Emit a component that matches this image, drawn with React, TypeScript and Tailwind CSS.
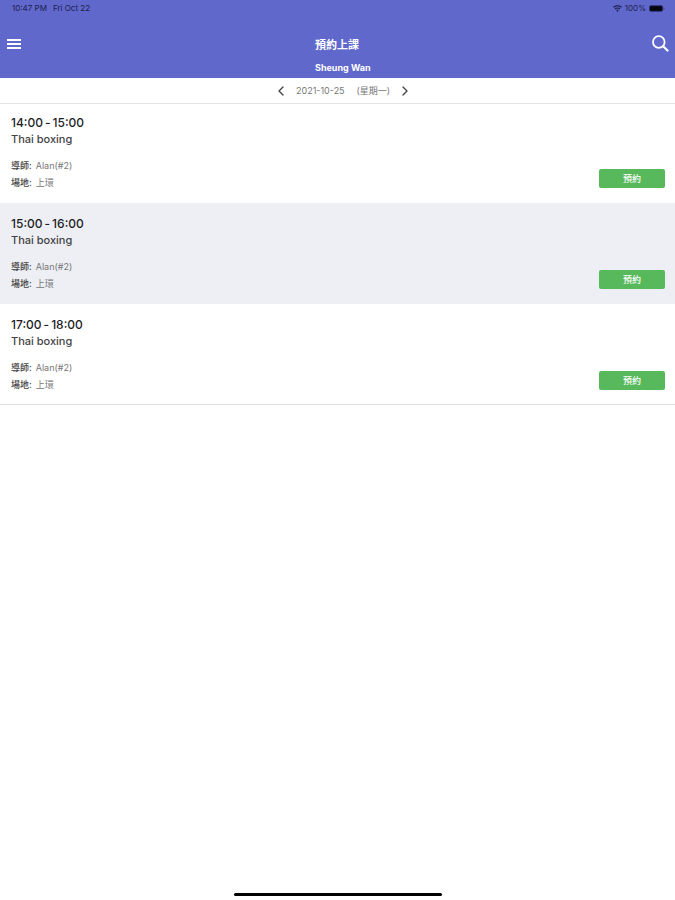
import { ChevronLeft, ChevronRight } from "lucide-react";

const lessons = [
  { start: "14:00", end: "15:00", name: "Thai boxing", coach: "Alan(#2)", venue: "上環" },
  { start: "15:00", end: "16:00", name: "Thai boxing", coach: "Alan(#2)", venue: "上環" },
  { start: "17:00", end: "18:00", name: "Thai boxing", coach: "Alan(#2)", venue: "上環" },
];

const StatusBar = () => (
  <div className="flex h-4 items-center justify-between pl-3 pr-[10px] text-[8px] leading-4 text-[#1c1e4c]">
    <div className="flex gap-[6px]">
      <span>10:47 PM</span>
      <span>Fri Oct 22</span>
    </div>
    <div className="flex items-center gap-[3px]">
      <svg viewBox="0 0 16 12" className="h-[7px] w-[9px]" fill="currentColor" aria-hidden="true">
        <path d="M8 0C5 0 2.200 1.100 0 3l1.500 1.700a10 10 0 0 1 13 0L16 3C13.800 1.100 11 0 8 0zM8 4C6 4 4.200 4.700 2.800 5.900l1.600 1.800a5.500 5.500 0 0 1 7.200 0l1.600-1.800C11.800 4.700 10 4 8 4zM8 8c-.9 0-1.700.3-2.300.8L8 12l2.300-3.200C9.700 8.300 8.900 8 8 8z" />
      </svg>
      <span>100%</span>
      <svg viewBox="0 0 17 7" className="h-[7px] w-4" aria-hidden="true">
        <rect x="0.500" y="0.500" width="14" height="6" rx="1.500" fill="#05050f" stroke="#30336f" />
        <path d="M15.500 2.300v2.400c.7-.2 1-.7 1-1.200s-.3-1-1-1.200z" fill="#30336f" />
      </svg>
    </div>
  </div>
);

const Header = () => (
  <header className="bg-[#6068cc] text-white">
    <StatusBar />
    <div className="flex h-[62px] justify-between px-[6px] pt-[18px]">
      <div className="flex-1">
        <button type="button" aria-label="Menu" className="block h-5 w-4">
          <svg viewBox="0 0 16 20" className="h-5 w-4" stroke="currentColor" strokeWidth="2" aria-hidden="true">
            <path d="M1 6h14M1 10h14M1 14h14" />
          </svg>
        </button>
      </div>
      <div className="w-[45px] whitespace-nowrap font-bold">
        <h1 className="text-[11px] leading-[22px]">預約上課</h1>
        <p className="mt-[2px] text-[9px] leading-5">Sheung Wan</p>
      </div>
      <div className="flex flex-1 justify-end">
        <button type="button" aria-label="Search" className="block size-[18px]">
          <svg viewBox="0 0 18 18" className="size-[18px]" fill="none" stroke="currentColor" strokeWidth="1.800" strokeLinecap="round" aria-hidden="true">
            <circle cx="7.800" cy="8" r="5.800" />
            <path d="M12.100 12.300l4.400 4.200" strokeWidth="2.200" />
          </svg>
        </button>
      </div>
    </div>
  </header>
);

const DateBar = () => (
  <div className="flex h-[26px] items-center justify-center border-b border-[#e4e4e6] pl-[11px] text-[#777]">
    <button type="button" aria-label="Previous day">
      <ChevronLeft className="size-4 text-[#444]" />
    </button>
    <div className="mx-[7px] flex w-[94px] justify-between whitespace-nowrap text-[9px] leading-4">
      <span>2021-10-25</span>
      <span>(星期一)</span>
    </div>
    <button type="button" aria-label="Next day">
      <ChevronRight className="size-4 text-[#444]" />
    </button>
  </div>
);

const App = () => (
  <div className="flex min-h-screen flex-col bg-white font-[Inter,'Noto_Sans_CJK_TC',sans-serif]">
    <Header />
    <DateBar />
    <ul className="border-b border-[#e0e0e2]">
      {lessons.map((lesson) => (
        <li
          key={lesson.start}
          className="flex items-end justify-between py-3 pl-[11px] pr-[10px] first:pt-[10px] last:pb-[11px] even:bg-[#edeff5]"
        >
          <div>
            <h2 className="flex gap-[2px] text-[12px] font-medium leading-[17px] text-[#1d1d1f]">
              <span>{lesson.start}</span>
              <span>-</span>
              <span>{lesson.end}</span>
            </h2>
            <p className="text-[11px] font-medium leading-[17px] text-[#444]">{lesson.name}</p>
            <dl className="mt-[9px] text-[9px] leading-[17px] text-[#777]">
              <div className="flex gap-1">
                <dt className="font-medium text-[#444]">導師:</dt>
                <dd>{lesson.coach}</dd>
              </div>
              <div className="flex gap-1">
                <dt className="font-medium text-[#444]">場地:</dt>
                <dd>{lesson.venue}</dd>
              </div>
            </dl>
          </div>
          <button
            type="button"
            className="mb-[3px] h-[19px] w-[66px] rounded-xs bg-[#57b95b] text-[9px] font-medium leading-4 text-white"
          >
            預約
          </button>
        </li>
      ))}
    </ul>
    <div className="mx-auto mb-1 mt-auto h-[3px] w-[208px] rounded-full bg-black" />
  </div>
);

export default App;
